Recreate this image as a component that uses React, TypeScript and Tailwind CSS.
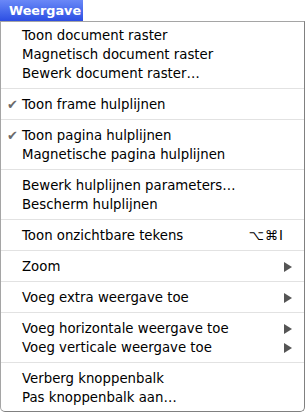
import React from "react";

/* ------------------------------------------------------------------ */
/* Menu data                                                          */
/* ------------------------------------------------------------------ */

type Item = {
  label: string;
  checked?: boolean;
  shortcut?: string;
  submenu?: boolean;
};

const groups: Item[][] = [
  [
    { label: "Toon document raster" },
    { label: "Magnetisch document raster" },
    { label: "Bewerk document raster…" },
  ],
  [{ label: "Toon frame hulplijnen", checked: true }],
  [
    { label: "Toon pagina hulplijnen", checked: true },
    { label: "Magnetische pagina hulplijnen" },
  ],
  [
    { label: "Bewerk hulplijnen parameters…" },
    { label: "Bescherm hulplijnen" },
  ],
  [{ label: "Toon onzichtbare tekens", shortcut: "⌥⌘I" }],
  [{ label: "Zoom", submenu: true }],
  [{ label: "Voeg extra weergave toe", submenu: true }],
  [
    { label: "Voeg horizontale weergave toe", submenu: true },
    { label: "Voeg verticale weergave toe", submenu: true },
  ],
  [{ label: "Verberg knoppenbalk" }, { label: "Pas knoppenbalk aan…" }],
];

/* ------------------------------------------------------------------ */
/* Main component                                                     */
/* ------------------------------------------------------------------ */

export default function App() {
  return (
    <div
      className="w-[306px] h-[412px] bg-white overflow-hidden"
      style={{ fontFamily: '"DejaVu Sans", Verdana, sans-serif' }}
    >
      {/* ---------- menu bar title ---------- */}
      <div className="h-[21px] flex">
        <div className="w-[83px] h-full bg-gradient-to-b from-[#6a88f7] to-[#2d4de3] text-white font-bold text-[12.8px] leading-[21px] pl-[9px]">
          Weergave
        </div>
      </div>

      {/* ---------- dropdown ---------- */}
      <div className="w-[305px] border border-[#a5a5a5] border-r-[#808080] border-b-[#808080] rounded-b-[5px] bg-white pt-[4px] pb-[4px] text-[13.3px] text-black">
        {groups.map((g, gi) => (
          <div key={gi}>
            {gi > 0 && (
              <div className="h-[12px] pt-[5px]">
                <div className="w-full h-px bg-[#e2e2e2]" />
              </div>
            )}
            {g.map((it) => (
              <Row key={it.label} item={it} />
            ))}
          </div>
        ))}
      </div>
    </div>
  );
}

function Row({ item }: { item: Item }) {
  return (
    <div className="h-[19px] flex items-center">
      <span className="w-[21px] pl-[6px] text-[13px] leading-none text-[#6a6a6a]">
        {item.checked ? "✔" : ""}
      </span>
      <span className="flex-1 whitespace-nowrap">{item.label}</span>
      {item.shortcut && (
        <span className="pr-[20px] tracking-[1px]">{item.shortcut}</span>
      )}
      {item.submenu && (
        <svg width="8" height="10" viewBox="0 0 8 10" className="mr-[12px]">
          <path d="M0 0 L8 5 L0 10 Z" fill="#555" />
        </svg>
      )}
    </div>
  );
}
